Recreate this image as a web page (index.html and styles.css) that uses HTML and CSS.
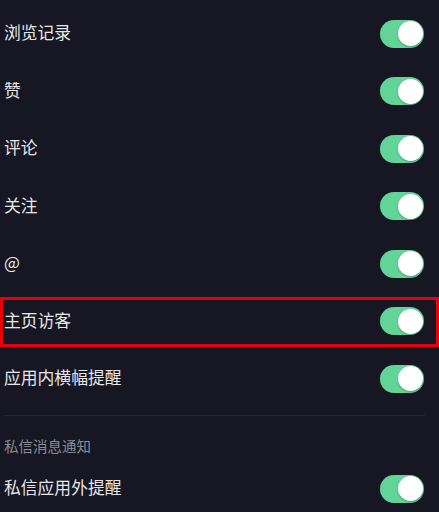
FILE: index.html
```html
<!DOCTYPE html>
<html lang="zh-CN">
<head>
<meta charset="utf-8">
<link rel="stylesheet" href="styles.css">
</head>
<body>
<div class="page">
  <div class="rows">
    <div class="row"><span class="label">浏览记录</span><span class="toggle"><span class="knob"></span></span></div>
    <div class="row"><span class="label">赞</span><span class="toggle"><span class="knob"></span></span></div>
    <div class="row"><span class="label">评论</span><span class="toggle"><span class="knob"></span></span></div>
    <div class="row"><span class="label">关注</span><span class="toggle"><span class="knob"></span></span></div>
    <div class="row"><span class="label">@</span><span class="toggle"><span class="knob"></span></span></div>
    <div class="row highlighted"><span class="label">主页访客</span><span class="toggle"><span class="knob"></span></span></div>
    <div class="row"><span class="label">应用内横幅提醒</span><span class="toggle"><span class="knob"></span></span></div>
  </div>
  <div class="divider"></div>
  <div class="section-title">私信消息通知</div>
  <div class="row last"><span class="label">私信应用外提醒</span><span class="toggle"><span class="knob"></span></span></div>
</div>
</body>
</html>
```
FILE: styles.css
```css
html, body {
  margin: 0;
  padding: 0;
  background: #161722;
}
.page {
  width: 439px;
  height: 512px;
  overflow: hidden;
  background: #161722;
  font-family: "Noto Sans CJK SC", "Noto Sans", sans-serif;
}
.rows {
  padding-top: 5px;
}
.row {
  position: relative;
  height: 57.5px;
  display: flex;
  align-items: center;
  justify-content: space-between;
  padding: 0 15px 0 4px;
}
.label {
  color: #e6e6ea;
  font-size: 16.8px;
  line-height: 20px;
  margin-top: -3px;
}
.toggle {
  width: 44px;
  height: 28px;
  border-radius: 14px;
  background: #63d498;
  display: flex;
  align-items: center;
  justify-content: flex-end;
  padding: 0 1.5px;
  box-sizing: border-box;
}
.knob {
  width: 25px;
  height: 25px;
  border-radius: 50%;
  background: #ffffff;
  box-shadow: 0 1px 2px rgba(0, 0, 0, 0.25);
}
.highlighted::after {
  content: "";
  position: absolute;
  left: 0;
  right: 0;
  top: 4px;
  bottom: 3.5px;
  border: 3px solid #e8000b;
}
.divider {
  height: 1px;
  background: #25262f;
  margin: 7.5px 14px 0 4px;
}
.section-title {
  color: #8b8b94;
  font-size: 14.5px;
  line-height: 20px;
  padding: 20px 0 0 4px;
}
.row.last {
  margin-top: 4px;
}
```
